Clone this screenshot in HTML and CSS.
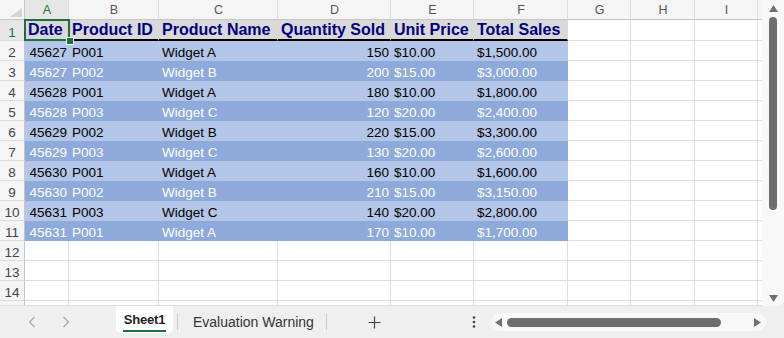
FILE: index.html
```html
<!DOCTYPE html>
<html>
<head>
<meta charset="utf-8">
<link rel="stylesheet" href="styles.css">
</head>
<body>
<div class="app">
  <div class="main">
    <div class="sheet">
      <div class="row">
        <div class="c corner"><svg width="14" height="10" viewBox="0 0 14 10"><polygon points="13,0 13,9 1,9" fill="#d3d3d3"/></svg></div>
        <div class="c ch sel-h">A</div><div class="c ch">B</div><div class="c ch">C</div><div class="c ch">D</div><div class="c ch">E</div><div class="c ch">F</div><div class="c ch">G</div><div class="c ch">H</div><div class="c ch">I</div><div class="c ch"></div>
      </div>
      <div class="row hdr">
        <div class="c rh sel-h">1</div>
        <div class="c t">Date</div><div class="c t">Product ID</div><div class="c t">Product Name</div><div class="c t">Quantity Sold</div><div class="c t">Unit Price</div><div class="c t">Total Sales</div><div class="c"></div><div class="c"></div><div class="c"></div><div class="c"></div>
      </div>
      <div class="row light">
        <div class="c rh">2</div>
        <div class="c f num">45627</div><div class="c f">P001</div><div class="c f">Widget A</div><div class="c f num">150</div><div class="c f">$10.00</div><div class="c f">$1,500.00</div><div class="c"></div><div class="c"></div><div class="c"></div><div class="c"></div>
      </div>
      <div class="row dark">
        <div class="c rh">3</div>
        <div class="c f num">45627</div><div class="c f">P002</div><div class="c f">Widget B</div><div class="c f num">200</div><div class="c f">$15.00</div><div class="c f">$3,000.00</div><div class="c"></div><div class="c"></div><div class="c"></div><div class="c"></div>
      </div>
      <div class="row light">
        <div class="c rh">4</div>
        <div class="c f num">45628</div><div class="c f">P001</div><div class="c f">Widget A</div><div class="c f num">180</div><div class="c f">$10.00</div><div class="c f">$1,800.00</div><div class="c"></div><div class="c"></div><div class="c"></div><div class="c"></div>
      </div>
      <div class="row dark">
        <div class="c rh">5</div>
        <div class="c f num">45628</div><div class="c f">P003</div><div class="c f">Widget C</div><div class="c f num">120</div><div class="c f">$20.00</div><div class="c f">$2,400.00</div><div class="c"></div><div class="c"></div><div class="c"></div><div class="c"></div>
      </div>
      <div class="row light">
        <div class="c rh">6</div>
        <div class="c f num">45629</div><div class="c f">P002</div><div class="c f">Widget B</div><div class="c f num">220</div><div class="c f">$15.00</div><div class="c f">$3,300.00</div><div class="c"></div><div class="c"></div><div class="c"></div><div class="c"></div>
      </div>
      <div class="row dark">
        <div class="c rh">7</div>
        <div class="c f num">45629</div><div class="c f">P003</div><div class="c f">Widget C</div><div class="c f num">130</div><div class="c f">$20.00</div><div class="c f">$2,600.00</div><div class="c"></div><div class="c"></div><div class="c"></div><div class="c"></div>
      </div>
      <div class="row light">
        <div class="c rh">8</div>
        <div class="c f num">45630</div><div class="c f">P001</div><div class="c f">Widget A</div><div class="c f num">160</div><div class="c f">$10.00</div><div class="c f">$1,600.00</div><div class="c"></div><div class="c"></div><div class="c"></div><div class="c"></div>
      </div>
      <div class="row dark">
        <div class="c rh">9</div>
        <div class="c f num">45630</div><div class="c f">P002</div><div class="c f">Widget B</div><div class="c f num">210</div><div class="c f">$15.00</div><div class="c f">$3,150.00</div><div class="c"></div><div class="c"></div><div class="c"></div><div class="c"></div>
      </div>
      <div class="row light">
        <div class="c rh">10</div>
        <div class="c f num">45631</div><div class="c f">P003</div><div class="c f">Widget C</div><div class="c f num">140</div><div class="c f">$20.00</div><div class="c f">$2,800.00</div><div class="c"></div><div class="c"></div><div class="c"></div><div class="c"></div>
      </div>
      <div class="row dark">
        <div class="c rh">11</div>
        <div class="c f num">45631</div><div class="c f">P001</div><div class="c f">Widget A</div><div class="c f num">170</div><div class="c f">$10.00</div><div class="c f">$1,700.00</div><div class="c"></div><div class="c"></div><div class="c"></div><div class="c"></div>
      </div>
      <div class="row">
        <div class="c rh">12</div>
        <div class="c"></div><div class="c"></div><div class="c"></div><div class="c"></div><div class="c"></div><div class="c"></div><div class="c"></div><div class="c"></div><div class="c"></div><div class="c"></div>
      </div>
      <div class="row">
        <div class="c rh">13</div>
        <div class="c"></div><div class="c"></div><div class="c"></div><div class="c"></div><div class="c"></div><div class="c"></div><div class="c"></div><div class="c"></div><div class="c"></div><div class="c"></div>
      </div>
      <div class="row">
        <div class="c rh">14</div>
        <div class="c"></div><div class="c"></div><div class="c"></div><div class="c"></div><div class="c"></div><div class="c"></div><div class="c"></div><div class="c"></div><div class="c"></div><div class="c"></div>
      </div>
      <div class="row">
        <div class="c rh"></div>
        <div class="c"></div><div class="c"></div><div class="c"></div><div class="c"></div><div class="c"></div><div class="c"></div><div class="c"></div><div class="c"></div><div class="c"></div><div class="c"></div>
      </div>
      <div class="selbox"></div>
      <div class="handle"></div>
    </div>
    <div class="vscroll">
      <svg class="vup" width="9" height="7" viewBox="0 0 9 7"><polygon points="4.5,0 9,7 0,7" fill="#707070"/></svg>
      <div class="vthumb"></div>
      <div class="spacer"></div>
      <svg class="vdown" width="9" height="7" viewBox="0 0 9 7"><polygon points="0,0 9,0 4.5,7" fill="#707070"/></svg>
    </div>
  </div>
  <div class="bottom">
    <svg class="prev" width="8" height="12" viewBox="0 0 8 12"><path d="M6.5 1 L1.5 6 L6.5 11" stroke="#a6a6a6" stroke-width="1.2" fill="none"/></svg>
    <svg class="next" width="8" height="12" viewBox="0 0 8 12"><path d="M1.5 1 L6.5 6 L1.5 11" stroke="#a6a6a6" stroke-width="1.2" fill="none"/></svg>
    <div class="tab active"><span class="tab-label">Sheet1</span></div>
    <div class="tab other">Evaluation Warning</div>
    <svg class="plus" width="13" height="13" viewBox="0 0 13 13"><path d="M6.5 0.5 V12.5 M0.5 6.5 H12.5" stroke="#444" stroke-width="1.2"/></svg>
    <svg class="dots" width="4" height="12" viewBox="0 0 4 12"><circle cx="2" cy="1.5" r="1.3" fill="#444"/><circle cx="2" cy="6" r="1.3" fill="#444"/><circle cx="2" cy="10.5" r="1.3" fill="#444"/></svg>
    <div class="hscroll">
      <svg width="7" height="9" viewBox="0 0 7 9"><polygon points="0,4.5 7,0 7,9" fill="#707070"/></svg>
      <div class="hthumb"></div>
      <svg width="7" height="9" viewBox="0 0 7 9"><polygon points="7,4.5 0,0 0,9" fill="#707070"/></svg>
    </div>
  </div>
</div>
</body>
</html>
```
FILE: styles.css
```css
html, body {
  margin: 0;
  padding: 0;
  background: #efefef;
}
.app {
  width: 784px;
  height: 338px;
  display: flex;
  flex-direction: column;
  overflow: hidden;
  font-family: "Liberation Sans", Arial, sans-serif;
}
.main {
  display: flex;
  height: 306px;
  flex: none;
}
.sheet {
  position: relative;
  width: 762px;
  height: 306px;
  overflow: hidden;
  background: #fff;
  display: grid;
  grid-template-columns: 25px 44px 90px 119px 113px 83px 94px 63px 64px 63px 4px;
  grid-template-rows: 20px 21px repeat(13, 20px) 5px;
}
.row {
  display: contents;
}
.c {
  box-sizing: border-box;
  border-right: 1px solid #dedede;
  border-bottom: 1px solid #dedede;
  font-size: 13.5px;
  line-height: 15px;
  padding: 0 2px 0 3px;
  display: flex;
  align-items: flex-end;
  white-space: nowrap;
  overflow: hidden;
  color: #000;
}
.num {
  justify-content: flex-end;
  padding: 0 1px 0 2px;
}
.corner {
  background: #f5f5f5;
  border-right: 1px solid #c6c6c6;
  border-bottom: 1px solid #c6c6c6;
  align-items: flex-end;
  justify-content: flex-end;
  padding: 0 1px 1px 0;
}
.ch {
  background: #f5f5f5;
  border-right: 1px solid #dcdcdc;
  border-bottom: 1px solid #c6c6c6;
  color: #555;
  font-size: 12.5px;
  justify-content: center;
  align-items: center;
  line-height: 14px;
}
.rh {
  background: #f5f5f5;
  border-right: 1px solid #c6c6c6;
  border-bottom: 1px solid #dcdcdc;
  color: #444;
  font-size: 13.5px;
  justify-content: center;
  padding: 0;
}
.sel-h {
  background: #e6e6e6;
  color: #1e7145;
}
.t {
  background: #d9d9d9;
  border-right-color: transparent;
  border-bottom: 2px solid #000;
  color: #000080;
  font-weight: bold;
  font-size: 16px;
  line-height: 19px;
  padding: 0 3px;
}
.light .f {
  background: #b4c6e7;
  border-color: transparent;
  color: #000;
}
.dark .f {
  background: #8eaadb;
  border-color: transparent;
  color: #fff;
}
.selbox {
  position: absolute;
  left: 24px;
  top: 19px;
  width: 46px;
  height: 22px;
  box-sizing: border-box;
  border: 2px solid #1e6e42;
}
.handle {
  position: absolute;
  left: 66px;
  top: 37px;
  width: 6px;
  height: 6px;
  background: #1e6e42;
  border: 1px solid #fff;
}
.vscroll {
  width: 22px;
  height: 306px;
  background: #f8f8f8;
  border-bottom-right-radius: 6px;
  display: flex;
  flex-direction: column;
  align-items: center;
}
.vup {
  margin-top: 5px;
}
.vthumb {
  margin-top: 5px;
  width: 8px;
  height: 193px;
  border-radius: 4px;
  background: #6e6e6e;
}
.spacer {
  flex: 1;
}
.vdown {
  margin-bottom: 4px;
}
.bottom {
  height: 32px;
  display: flex;
  align-items: center;
  background: #efefef;
}
.prev {
  margin-left: 28px;
}
.next {
  margin-left: 26px;
}
.tab {
  box-sizing: border-box;
  font-size: 14px;
  color: #333;
}
.active {
  margin-left: 46px;
  width: 57px;
  height: 27px;
  align-self: flex-start;
  background: #fff;
  border-radius: 0 0 5px 5px;
  display: flex;
  justify-content: center;
  padding-top: 6px;
}
.tab-label {
  font-size: 13px;
  font-weight: bold;
  color: #222;
  height: 18px;
  border-bottom: 2px solid #1e7145;
  padding: 0 1px;
  letter-spacing: -0.2px;
}
.other {
  margin-left: 4px;
  width: 150px;
  height: 16px;
  line-height: 16px;
  border-left: 1px solid #c8c8c8;
  border-right: 1px solid #c8c8c8;
  padding-left: 15px;
}
.plus {
  margin-left: 41px;
}
.dots {
  margin-left: 91px;
}
.hscroll {
  margin-left: 15px;
  width: 275px;
  height: 18px;
  box-sizing: border-box;
  border-radius: 9px;
  background: #f8f8f8;
  display: flex;
  align-items: center;
  padding: 0 5px 0 4px;
}
.hthumb {
  margin-left: 5px;
  width: 215px;
  height: 9px;
  border-radius: 4.5px;
  background: #6e6e6e;
  margin-right: 33px;
}
```
